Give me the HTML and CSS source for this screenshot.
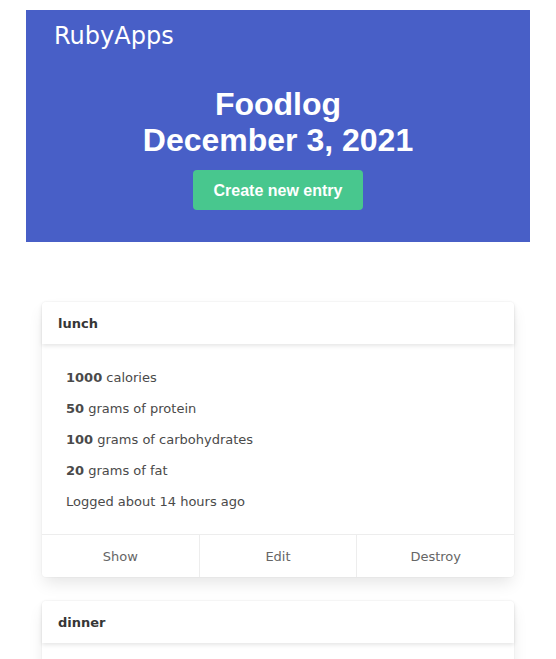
FILE: index.html
```html
<!DOCTYPE html>
<html lang="en">
<head>
<meta charset="utf-8">
<title>Foodlog</title>
<meta name="viewport" content="width=device-width, initial-scale=1">
<link rel="stylesheet" href="styles.css">
</head>
<body>
<header class="hero">
  <a class="brand" href="#">RubyApps</a>
  <div class="hero-body">
    <h1 class="title">Foodlog<br>December 3, 2021</h1>
    <a class="button" href="#">Create new entry</a>
  </div>
</header>
<main class="entries">
  <article class="card">
    <h2 class="card-header">lunch</h2>
    <div class="card-content">
      <p><strong>1000</strong> calories</p>
      <p><strong>50</strong> grams of protein</p>
      <p><strong>100</strong> grams of carbohydrates</p>
      <p><strong>20</strong> grams of fat</p>
      <p>Logged about 14 hours ago</p>
    </div>
    <footer class="card-footer">
      <a href="#">Show</a>
      <a href="#">Edit</a>
      <a href="#">Destroy</a>
    </footer>
  </article>
  <article class="card">
    <h2 class="card-header">dinner</h2>
    <div class="card-content"></div>
  </article>
</main>
</body>
</html>
```

FILE: styles.css
```css
* {
  box-sizing: border-box;
  margin: 0;
  padding: 0;
}

html {
  scrollbar-width: none;
}

body {
  padding: 10px 26px 0;
  background: #fff;
  color: #4a4a4a;
  font: 13px/18px "DejaVu Sans", Verdana, sans-serif;
}

a {
  color: inherit;
  text-decoration: none;
}

.hero {
  padding: 8px 28px 32px;
  background: #485fc7;
  color: #fff;
}

.brand {
  display: inline-block;
  font-size: 24px;
  line-height: 36px;
}

.hero-body {
  margin-top: 32px;
  text-align: center;
}

.title {
  font: bold 32px/36px "Liberation Sans", Arial, sans-serif;
}

.button {
  display: inline-block;
  margin-top: 12px;
  padding: 9px 21px 7px;
  border-radius: 4px;
  background: #48c78e;
  font: bold 16px/24px "Liberation Sans", Arial, sans-serif;
  vertical-align: top;
}

.entries {
  display: grid;
  gap: 24px;
  padding: 60px 16px 0;
}

.card {
  border-radius: 4px;
  background: #fff;
  box-shadow: 0 8px 16px -2px rgba(10, 10, 10, 0.1), 0 0 0 1px rgba(10, 10, 10, 0.02);
}

.card-header {
  padding: 13px 16px 11px;
  border-radius: 4px 4px 0 0;
  box-shadow: 0 2px 4px rgba(10, 10, 10, 0.1);
  color: #363636;
  font-size: 13px;
  line-height: 18px;
}

.card-content {
  display: grid;
  gap: 13px;
  padding: 25px 24px 23px;
}

.card-footer {
  display: flex;
  border-top: 1px solid #ededed;
}

.card-footer a {
  flex: 1;
  padding: 13px 12px 11px;
  color: #666;
  text-align: center;
}

.card-footer a + a {
  border-left: 1px solid #ededed;
}
```
